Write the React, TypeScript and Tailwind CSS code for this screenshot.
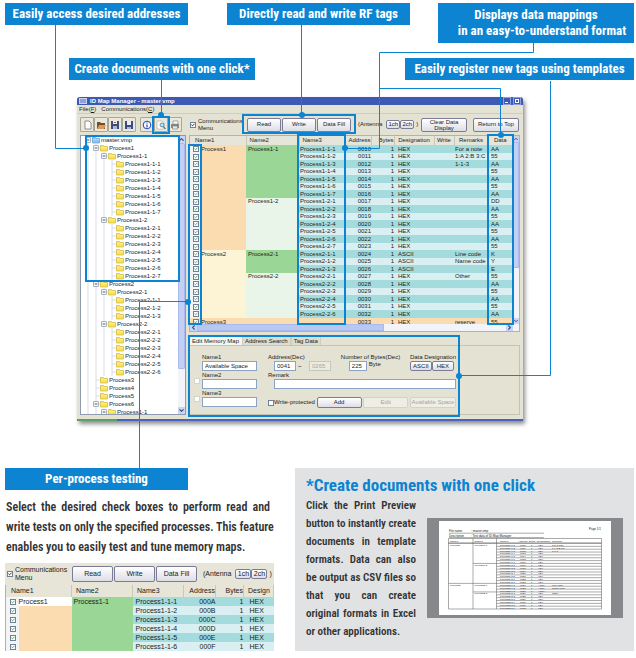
import { ReactNode } from "react";
import clsx from "clsx";
import {
  Check,
  ChevronDown,
  ChevronLeft,
  ChevronRight,
  ChevronUp,
} from "lucide-react";

type Row = {
  name1?: string;
  name2?: string;
  name3: string;
  address: string;
  designation: string;
  remarks?: string;
  data: string;
};

const groups = [
  { name1: "Process1", name2: "Process1-1", count: 7 },
  { name1: "", name2: "Process1-2", count: 7 },
  { name1: "Process2", name2: "Process2-1", count: 3 },
  { name1: "", name2: "Process2-2", count: 6 },
];

const dataValues =
  "AA 55 AA 55 AA 55 AA DD AA 55 AA 55 AA 55 K Y E 55 AA 55 AA 55 AA".split(
    " ",
  );

const remarks: Record<number, string> = {
  0: "For a note",
  1: "1:A 2:B 3:C",
  2: "1-1-3",
  14: "Line code",
  15: "Name code",
  17: "Other",
};

const rows: Row[] = groups
  .flatMap((group) =>
    Array.from({ length: group.count }, (_, i) => ({
      name1: i === 0 ? group.name1 : "",
      name2: i === 0 ? group.name2 : "",
      name3: `${group.name2}-${i + 1}`,
    })),
  )
  .map((row, i) => ({
    ...row,
    address: `00${10 + i}`,
    designation: i > 13 && i < 17 ? "ASCII" : "HEX",
    remarks: remarks[i],
    data: dataValues[i],
  }));

type Node = { label: string; level: number; open?: boolean };

const leaves = (parent: string, count: number): Node[] =>
  Array.from({ length: count }, (_, i) => ({
    label: `${parent}-${i + 1}`,
    level: 3,
  }));

const tree: Node[] = [
  { label: "master.vmp", level: 0, open: true },
  { label: "Process1", level: 1, open: true },
  { label: "Process1-1", level: 2, open: true },
  ...leaves("Process1-1", 7),
  { label: "Process1-2", level: 2, open: true },
  ...leaves("Process1-2", 7),
  { label: "Process2", level: 1, open: true },
  { label: "Process2-1", level: 2, open: true },
  ...leaves("Process2-1", 3),
  { label: "Process2-2", level: 2, open: true },
  ...leaves("Process2-2", 6),
  { label: "Process3", level: 1 },
  { label: "Process4", level: 1 },
  { label: "Process5", level: 1 },
  { label: "Process6", level: 1, open: true },
  { label: "Process1-1", level: 2, open: true },
];

const Callout = ({
  className,
  children,
}: {
  className?: string;
  children: ReactNode;
}) => (
  <h2
    className={clsx(
      "bg-[#0c84d2] text-center text-[13px] leading-[16px] font-bold whitespace-nowrap text-white py-[3px]",
      className,
    )}
  >
    {children}
  </h2>
);

const Tick = ({
  label,
  checked,
  green,
}: {
  label: string;
  checked?: boolean;
  green?: boolean;
}) => (
  <span className="relative block size-[6px] shrink-0">
    <input
      type="checkbox"
      aria-label={label}
      defaultChecked={checked}
      className="peer block size-full appearance-none border border-[#71809a] bg-white"
    />
    <Check
      strokeWidth={5}
      className={clsx(
        "pointer-events-none absolute inset-[1px] hidden size-[4px] peer-checked:block",
        green ? "text-[#27a043]" : "text-black",
      )}
    />
  </span>
);

const Button = ({
  className,
  disabled,
  children,
}: {
  className?: string;
  disabled?: boolean;
  children: ReactNode;
}) => (
  <button
    disabled={disabled}
    className={clsx(
      "flex shrink-0 items-center justify-center rounded-[2px] border text-center",
      disabled
        ? "border-[#d3d2c8] bg-[#efeee6] text-[#a5a59c]"
        : "border-[#7a7c98] bg-linear-to-b from-white to-[#dddde6]",
      className,
    )}
  >
    {children}
  </button>
);

const Antenna = ({ className }: { className: string }) => (
  <div className="flex items-center">
    <span className="mr-[4px]">(Antenna</span>
    <Button className={clsx("to-[#b9b9c6]", className)}>1ch</Button>
    <Button className={className}>2ch</Button>
    <span className="ml-[2px]">)</span>
  </div>
);

const FolderIcon = ({ blue }: { blue?: boolean }) => (
  <svg viewBox="0 0 8 8" className="size-2 shrink-0">
    <path
      d="M0.5 1.5h2.8l0.8 1h3.4v4.5h-7z"
      fill={blue ? "#8fc4f2" : "#f6e35f"}
      stroke={blue ? "#4b8fd0" : "#c9ab2d"}
      strokeWidth="0.6"
    />
    <path d="M1 3.4h6" stroke="#fff" strokeWidth="0.6" opacity="0.7" />
  </svg>
);

const Expander = () => (
  <svg viewBox="0 0 8 8" className="size-2 shrink-0">
    <path d="M4 0v8M4 4h4" stroke="#c2c8d0" strokeWidth="0.6" />
    <rect
      x="1.7"
      y="1.7"
      width="4.6"
      height="4.6"
      fill="#fff"
      stroke="#7b8ba8"
      strokeWidth="0.7"
    />
    <path d="M2.7 4h2.6" stroke="#222" strokeWidth="0.8" />
  </svg>
);

const Guide = ({ branch }: { branch?: boolean }) => (
  <svg viewBox="0 0 8 8" className="size-2 shrink-0">
    <path
      d={branch ? "M4 0v8M4 4h4" : "M4 0v8"}
      stroke="#c2c8d0"
      strokeWidth="0.6"
    />
  </svg>
);

const ProcessTree = () => (
  <div className="flex w-[106px] shrink-0 border border-[#8f9bb0] bg-white">
    <ul className="h-[278px] flex-1 overflow-hidden pl-[3px]">
      {tree.map((node, i) => (
        <li key={i} className="flex h-2 items-center leading-[8px]">
          {Array.from({ length: node.level }, (_, level) => (
            <Guide key={level} />
          ))}
          {node.open ? <Expander /> : <Guide branch />}
          <FolderIcon blue={node.level === 0} />
          <span className="ml-px whitespace-nowrap">{node.label}</span>
        </li>
      ))}
    </ul>
    <div className="flex w-[7px] flex-col bg-[#f2f4fa]">
      <ChevronUp className="size-[7px] bg-[#c9d5f5] text-[#3d5185]" strokeWidth={4} />
      <div className="h-[226px] rounded-[1px] border border-[#a8baf0] bg-[#c3d0f4]" />
      <ChevronDown
        className="mt-auto size-[7px] bg-[#c9d5f5] text-[#3d5185]"
        strokeWidth={4}
      />
    </div>
  </div>
);

const MappingTable = () => (
  <div className="border border-[#a9b2c2] bg-white">
    <div className="flex">
      <div className="h-[188px] flex-1 overflow-hidden">
        <table className="w-full table-fixed border-collapse text-left leading-[7px] whitespace-nowrap">
          <colgroup>
            <col className="w-[11px]" />
            <col className="w-[45px]" />
            <col className="w-[53px]" />
            <col className="w-[46px]" />
            <col className="w-[26px]" />
            <col className="w-[23px]" />
            <col className="w-[40px]" />
            <col className="w-[20px]" />
            <col className="w-[34px]" />
            <col />
          </colgroup>
          <thead className="bg-[#e6e5d9]">
            <tr className="h-[9px] [&>th]:border-r [&>th]:border-[#c9c7b8] [&>th]:p-0 [&>th]:font-normal">
              <th colSpan={2}>
                <span className="pl-[5px]">Name1</span>
              </th>
              <th>
                <span className="pl-[3px]">Name2</span>
              </th>
              <th>
                <span className="pl-[3px]">Name3</span>
              </th>
              <th className="text-right">Address</th>
              <th className="text-right">Bytes</th>
              <th className="text-center">Designation</th>
              <th className="text-center">Write</th>
              <th className="text-center">Remarks</th>
              <th className="text-center">Data</th>
            </tr>
          </thead>
          <tbody>
            {rows.map((row, i) => (
              <tr
                key={row.name3}
                className={clsx(
                  "[&>td]:p-0",
                  i % 2 ? "h-[7px] bg-[#d9eff2]" : "h-[8px] bg-[#a4dbdc]",
                )}
              >
                <td className="bg-[#f4f4f4]">
                  <div className="pl-[3px]">
                    <Tick label={`Select ${row.name3}`} checked green />
                  </div>
                </td>
                <td className={i < 14 ? "bg-[#fbdcb0]" : "bg-[#fdf4d6]"}>
                  {row.name1}
                </td>
                <td
                  className={
                    i < 7 || (i > 13 && i < 17)
                      ? "bg-[#9ad695]"
                      : "bg-[#eaf5e9]"
                  }
                >
                  <span className="pl-[2px]">{row.name2}</span>
                </td>
                <td>
                  <span className="pl-px">{row.name3}</span>
                </td>
                <td className="text-right">{row.address}</td>
                <td className="text-right">1</td>
                <td>
                  <span className="pl-[4px]">{row.designation}</span>
                </td>
                <td />
                <td>
                  <span className="pl-px">{row.remarks}</span>
                </td>
                <td>
                  <span className="pl-[3px]">{row.data}</span>
                </td>
              </tr>
            ))}
            <tr className="h-[8px] bg-[#fbdcb0] [&>td]:p-0">
              <td>
                <div className="pl-[3px]">
                  <Tick label="Select Process3" checked green />
                </div>
              </td>
              <td colSpan={3}>Process3</td>
              <td className="text-right">0033</td>
              <td className="text-right">1</td>
              <td>
                <span className="pl-[4px]">HEX</span>
              </td>
              <td />
              <td>
                <span className="pl-px">reserve</span>
              </td>
              <td>
                <span className="pl-[3px]">55</span>
              </td>
            </tr>
          </tbody>
        </table>
      </div>
      <div className="flex w-[6px] flex-col bg-[#f2f4fa]">
        <ChevronUp className="size-[6px] bg-[#c9d5f5] text-[#3d5185]" strokeWidth={4} />
        <div className="h-[126px] border border-[#a8baf0] bg-[#c3d0f4]" />
        <ChevronDown
          className="mt-auto size-[6px] bg-[#c9d5f5] text-[#3d5185]"
          strokeWidth={4}
        />
      </div>
    </div>
    <div className="flex h-[7px] bg-[#f2f4fa] pr-[6px]">
      <ChevronLeft className="size-[7px] bg-[#c9d5f5] text-[#3d5185]" strokeWidth={4} />
      <div className="w-[58%] border border-[#a8baf0] bg-[#b9c8f1]" />
      <ChevronRight
        className="ml-auto size-[7px] bg-[#c9d5f5] text-[#3d5185]"
        strokeWidth={4}
      />
    </div>
  </div>
);

const inputClass =
  "block h-[10px] border border-[#8ba3c4] bg-white px-[2px] leading-[8px] disabled:border-[#c4c6c0] disabled:bg-[#ecebe0] disabled:text-[#a5a59c]";

const EditPanel = () => (
  <div className="mt-[4px]">
    <div className="flex" role="tablist">
      {["Edit Memory Map", "Address Search", "Tag Data"].map((tab, i) => (
        <button
          key={tab}
          role="tab"
          aria-selected={i === 0}
          className={clsx(
            "h-[9px] border border-b-0 px-[2px] leading-[8px]",
            i === 0
              ? "border-[#f6f6f0] bg-[#f6f6f0]"
              : "border-[#cfcdbf] bg-[#dddccf]",
          )}
        >
          {tab}
        </button>
      ))}
    </div>
    <form
      className="flex h-[70px] gap-[11px] border border-[#c5c3b4] pt-[8px] pl-[4px] leading-[7px]"
      onSubmit={(e) => e.preventDefault()}
    >
      <div className="flex w-[63px] flex-col gap-px">
        <div className="pl-[8px]">
          <label htmlFor="name1">Name1</label>
          <input
            id="name1"
            defaultValue="Available Space"
            className={clsx(inputClass, "w-full")}
          />
        </div>
        {["Name2", "Name3"].map((name) => (
          <div key={name} className="flex items-center gap-[2px]">
            <input
              type="checkbox"
              aria-label={`Use ${name}`}
              className="size-[6px] shrink-0 appearance-none border border-[#d6d5ca] bg-white"
            />
            <div className="flex-1">
              <label htmlFor={name}>{name}</label>
              <input id={name} className={clsx(inputClass, "w-full")} />
            </div>
          </div>
        ))}
      </div>
      <div className="w-[188px]">
        <div className="flex justify-between whitespace-nowrap">
          <div>
            <label htmlFor="address">Address(Dec)</label>
            <div className="flex items-center pl-[6px]">
              <input
                id="address"
                defaultValue="0041"
                className={clsx(inputClass, "w-[22px]")}
              />
              <span className="w-[13px] pl-[2px]">~</span>
              <input
                aria-label="Last address"
                defaultValue="0265"
                disabled
                className={clsx(inputClass, "w-[22px]")}
              />
            </div>
          </div>
          <div>
            <label htmlFor="bytes">Number of Bytes(Dec)</label>
            <div className="flex gap-[2px] pl-[8px]">
              <input
                id="bytes"
                defaultValue="225"
                className={clsx(inputClass, "w-[18px]")}
              />
              <span>Byte</span>
            </div>
          </div>
          <div className="text-center">
            <p>Data Designation</p>
            <div className="flex">
              <Button className="h-[10px] w-[22px] to-[#b9b9c6]">ASCII</Button>
              <Button className="h-[10px] w-[22px]">HEX</Button>
            </div>
          </div>
        </div>
        <div className="mt-px">
          <label htmlFor="remark">Remark</label>
          <div className="pl-[6px]">
            <input id="remark" className={clsx(inputClass, "w-full")} />
          </div>
        </div>
        <div className="mt-[8px] flex items-center justify-between whitespace-nowrap">
          <label className="flex items-center">
            <Tick label="Write-protected" />
            Write-protected
          </label>
          <Button className="h-[11px] w-[45px]">Add</Button>
          <Button className="h-[11px] w-[45px]" disabled>
            Edit
          </Button>
          <Button className="h-[11px] w-[46px]" disabled>
            Available Space
          </Button>
        </div>
      </div>
    </form>
  </div>
);

// Icons of the program's own tool bar
const toolIcons = [
  {
    name: "New",
    art: <path d="M3 1h4l2 2v6H3z" fill="#fff" stroke="#777" strokeWidth="0.8" />,
  },
  {
    name: "Open",
    art: (
      <>
        <path d="M1 2h3l1 1h4v6H1z" fill="#7a4a2a" />
        <path d="M1 9l2-4h7L8 9z" fill="#d99a5c" />
      </>
    ),
  },
  {
    name: "Save",
    art: (
      <>
        <path d="M1 1h8v8H1z" fill="#3b4d7d" />
        <path d="M3 1h4v3H3z" fill="#e8edf8" />
        <path d="M4 2h2v1H4z" fill="#c04848" />
        <path d="M3 6h4v3H3z" fill="#a9b8d8" />
      </>
    ),
  },
  {
    name: "Save as",
    art: (
      <>
        <path d="M1 1h8v8H1z" fill="#3b4d7d" />
        <path d="M3 1h4v4H3z" fill="#e8edf8" />
        <path d="M3 7h4v2H3z" fill="#a9b8d8" />
      </>
    ),
  },
  {
    name: "Information",
    art: (
      <>
        <circle cx="5" cy="5" r="3.8" fill="#fff" stroke="#2440b8" />
        <path d="M5 4.4v3M5 2.4v1" stroke="#2440b8" strokeWidth="1.2" />
      </>
    ),
  },
  {
    name: "Print preview",
    art: (
      <>
        <path d="M1 1h5l2 2v6H1z" fill="#fff" stroke="#aaa" strokeWidth="0.6" />
        <circle cx="6" cy="5" r="2" fill="#bfe3f0" stroke="#3f7ca0" strokeWidth="0.8" />
        <path d="M7.4 6.6l2 2.4" stroke="#333" />
      </>
    ),
  },
  {
    name: "Print",
    art: (
      <>
        <path d="M3 1h5v3H3z" fill="#fff" stroke="#777" strokeWidth="0.6" />
        <path d="M1 4h8v4H1z" fill="#8b8b86" />
        <path d="M2.5 6h5v3h-5z" fill="#e8e8e4" stroke="#666" strokeWidth="0.5" />
      </>
    ),
  },
];

const ManagerWindow = () => (
  <section className="mr-[113px] ml-[77px] rounded-t-[3px] bg-[#e4e3d3] font-['Liberation_Sans',Arial,sans-serif] text-[6px] text-[#1c1c1c] shadow-[2px_3px_4px_rgba(0,0,0,0.45)]">
    <header className="flex h-2 items-center rounded-t-[3px] bg-[#3d59b5] px-[2px] text-[6px] leading-[8px] font-bold text-white">
      <svg viewBox="0 0 8 6" className="mr-[3px] h-[6px] w-2">
        <path d="M0 0h8v6H0z" fill="#c8d2f0" />
        <path d="M1 2h6M1 4h6" stroke="#3d59b5" strokeWidth="0.8" />
      </svg>
      <h1>ID Map Manager - master.vmp</h1>
      <button
        aria-label="Minimize"
        className="ml-auto flex size-2 items-end border border-[#8ea0dd] p-px"
      >
        <span className="h-px w-[3px] bg-white" />
      </button>
      <button
        aria-label="Restore"
        className="ml-[2px] size-2 border border-[#8ea0dd] p-px"
      >
        <span className="block size-[4px] border border-white" />
      </button>
    </header>
    <nav className="flex h-[9px] items-center gap-[5px] border-b border-[#cfcdbe] pl-[2px] leading-[8px]">
      <button>
        File(<u>F</u>)
      </button>
      <button>
        Communications(<u>C</u>)
      </button>
    </nav>
    <div className="flex h-[21px] items-center pr-[4px] pl-[3px] leading-[7px] whitespace-nowrap">
      {toolIcons.map((tool) => (
        <button
          key={tool.name}
          aria-label={tool.name}
          className={clsx(
            "flex h-[15px] w-[14px] items-center justify-center rounded-[1px] border border-[#a9a898] bg-[#e9e8db]",
            tool.name === "Information" && "ml-[4px]",
          )}
        >
          <svg viewBox="0 0 10 10" className="size-[10px]">
            {tool.art}
          </svg>
        </button>
      ))}
      <label className="ml-[8px] flex w-[56px] items-center gap-[2px]">
        <Tick label="Communications Menu" checked />
        <span>
          Communications
          <br />
          Menu
        </span>
      </label>
      <div className="mr-[7px] ml-px flex gap-px">
        <Button className="h-[14px] w-[34px]">Read</Button>
        <Button className="h-[14px] w-[34px]">Write</Button>
        <Button className="h-[14px] w-[34px]">Data Fill</Button>
      </div>
      <Antenna className="h-[9px] w-[14px]" />
      <Button className="ml-auto h-[14px] w-[46px] leading-[6px]">
        Clear Data
        <br />
        Display
      </Button>
      <Button className="ml-[6px] h-[14px] w-[46px]">Return to Top</Button>
    </div>
    <div className="flex gap-[3px] px-[3px] pb-[4px]">
      <ProcessTree />
      <div className="min-w-0 flex-1">
        <MappingTable />
        <EditPanel />
      </div>
    </div>
    <div className="flex h-[2px]">
      <div className="w-10 bg-[#58a063]" />
      <div className="flex-1 bg-[#4a63c0]" />
    </div>
  </section>
);

const highlights = [
  [86, 136, 93, 145],
  [153, 117, 16, 16],
  [243, 115, 112, 18],
  [189, 145, 12, 179],
  [298, 135, 47, 189],
  [488, 135, 25, 189],
  [189, 336, 270, 80],
];

const dots = [
  [86, 148],
  [161, 115],
  [302, 115],
  [345, 148],
  [501, 135],
  [459, 376],
  [188, 302],
];

const leaders = [
  "M55.5 25V148.5H86",
  "M161.5 80V115",
  "M301.5 25V115",
  "M533.5 43V52.5H379.5V148.5H345",
  "M379.5 88.5H500.5V135",
  "M550.5 81V375.5H459",
  "M188 301.5H139.5V468",
];

const Leaders = () => (
  <svg
    viewBox="0 0 636 468"
    preserveAspectRatio="none"
    className="pointer-events-none absolute top-0 left-0 h-[468px] w-full"
    fill="none"
    stroke="#0c84d2"
    aria-hidden="true"
  >
    {leaders.map((d) => (
      <path key={d} d={d} />
    ))}
    {highlights.map(([x, y, width, height]) => (
      <rect
        key={`${x}-${y}`}
        x={x}
        y={y}
        width={width}
        height={height}
        strokeWidth="2"
      />
    ))}
    {dots.map(([cx, cy]) => (
      <circle key={`${cx}-${cy}`} cx={cx} cy={cy} r="3" fill="#0c84d2" stroke="none" />
    ))}
  </svg>
);

const testRows = ["000A", "000B", "000C", "000D", "000E", "000F"];

const TestingSample = () => (
  <div className="mt-[6px] overflow-hidden bg-[#e6e5d7] font-['Liberation_Sans',Arial,sans-serif] text-[7px] text-[#1c1c1c]">
    <div className="flex h-[22px] items-center pl-[2px] leading-[8px] whitespace-nowrap">
      <label className="flex w-[65px] items-center gap-[2px]">
        <Tick label="Communications Menu in sample" checked />
        <span>
          Communications
          <br />
          Menu
        </span>
      </label>
      <div className="mr-[6px] flex gap-px">
        <Button className="h-[16px] w-[41px]">Read</Button>
        <Button className="h-[16px] w-[41px]">Write</Button>
        <Button className="h-[16px] w-[41px]">Data Fill</Button>
      </div>
      <Antenna className="h-[10px] w-[16px]" />
    </div>
    <table className="w-full table-fixed border-collapse border-l border-[#a9b2c2] text-left leading-[8px] whitespace-nowrap">
      <colgroup>
        <col className="w-[13px]" />
        <col className="w-[53px]" />
        <col className="w-[61px]" />
        <col className="w-[51px]" />
        <col className="w-[32px]" />
        <col className="w-[28px]" />
        <col />
      </colgroup>
      <thead>
        <tr className="h-[12px] [&>th]:border-r [&>th]:border-[#c9c7b8] [&>th]:p-0 [&>th]:font-normal">
          <th colSpan={2}>
            <span className="pl-[5px]">Name1</span>
          </th>
          <th>
            <span className="pl-[4px]">Name2</span>
          </th>
          <th>
            <span className="pl-[4px]">Name3</span>
          </th>
          <th className="text-right">Address</th>
          <th className="text-right">Bytes</th>
          <th>
            <span className="pl-[4px]">Design</span>
          </th>
        </tr>
      </thead>
      <tbody>
        {testRows.map((address, i) => (
          <tr
            key={address}
            className={clsx(
              "h-[9px] [&>td]:p-0",
              i % 2 ? "bg-[#d9eff2]" : "bg-[#a4dbdc]",
            )}
          >
            <td className="bg-[#f4f4f4]">
              <div className="pl-[4px]">
                <Tick label={`Test Process1-1-${i + 1}`} checked green />
              </div>
            </td>
            <td className={i === 0 ? "bg-white" : "bg-[#fbdcb0]"}>
              {i === 0 && "Process1"}
            </td>
            <td className="bg-[#9ad695]">
              {i === 0 && <span className="pl-[2px]">Process1-1</span>}
            </td>
            <td>
              <span className="pl-[3px]">Process1-1-{i + 1}</span>
            </td>
            <td className="text-right">{address}</td>
            <td className="text-right">1</td>
            <td>
              <span className="pl-[6px]">HEX</span>
            </td>
          </tr>
        ))}
      </tbody>
    </table>
  </div>
);

// Printed page of the memory map, 23 ruled lines under a two line heading
const PrintedPage = () => {
  const lineY = (i: number) => 22.5 + i * 2.85;
  return (
    <div className="bg-[#87888b] px-3 py-[3px]">
      <svg
        viewBox="0 0 172 94"
        className="block w-full bg-white font-['Liberation_Sans',Arial,sans-serif]"
        fontSize="3"
        fill="#222"
      >
        <text x="10" y="11">File name</text>
        <text x="32" y="11">: master.vmp</text>
        <text x="10" y="15.7">Description</text>
        <text x="32" y="15.7">: Test data of ID Map Manager</text>
        <text x="150" y="9">Page 1/1</text>
        <g stroke="#555" strokeWidth="0.5" fill="none">
          <path d="M10 12.2H105M10 16.6H105M9.5 17.5H162.5V88H9.5zM9.5 21.8H162.5" />
          <path d="M34 17.5V88M57.5 17.5V88" />
          {rows.map((row, i) => (
            <path
              key={row.name3}
              d={`M${row.name1 ? 9.5 : row.name2 ? 34 : 57.5} ${lineY(i)}H162.5`}
            />
          ))}
        </g>
        <g fontSize="2.5">
          <text x="11" y="20.6">Name1</text>
          <text x="35.5" y="20.6">Name2</text>
          <text x="61" y="20.6">Name3</text>
          <text x="79" y="20.6">Address</text>
          <text x="90" y="20.6">Bytes</text>
          <text x="98" y="20.6">Designation</text>
          <text x="113" y="20.6">Remarks</text>
          {rows.map((row, i) => (
            <g key={row.name3}>
              <text x="11" y={lineY(i) + 2.4}>{row.name1}</text>
              <text x="35.5" y={lineY(i) + 2.4}>{row.name2}</text>
              <text x="61" y={lineY(i) + 2.4}>{row.name3}</text>
              <text x="81" y={lineY(i) + 2.4}>{row.address}</text>
              <text x="92" y={lineY(i) + 2.4}>1</text>
              <text x="99" y={lineY(i) + 2.4}>{row.designation}</text>
              <text x="113" y={lineY(i) + 2.4}>{row.remarks}</text>
            </g>
          ))}
        </g>
      </svg>
    </div>
  );
};

const Justified = ({ lines }: { lines: string[] }) => (
  <>
    {lines.map((line, i) => (
      <span
        key={line}
        className={clsx(
          "block whitespace-nowrap",
          i < lines.length - 1 && "text-justify [text-align-last:justify]",
        )}
      >
        {line}{" "}
      </span>
    ))}
  </>
);

const App = () => {
  return (
    <main className="relative w-full bg-white pb-[7px] font-['Roboto_Condensed','Liberation_Sans_Narrow','Arial_Narrow',sans-serif] text-[#333]">
      <div className="flex items-start justify-between pt-[3px] pr-[2px] pl-[5px]">
        <Callout className="w-[183px]">Easily access desired addresses</Callout>
        <Callout className="-mr-[11px] w-[183px]">
          Directly read and write RF tags
        </Callout>
        <Callout className="w-[196px] py-[4px]">
          Displays data mappings
          <br />
          <span className="pl-3">in an easy-to-understand format</span>
        </Callout>
      </div>
      <div className="flex justify-between pt-[15px] pr-[2px] pb-[17px] pl-[69px]">
        <Callout className="w-[186px]">Create documents with one click*</Callout>
        <Callout className="w-[229px]">
          Easily register new tags using templates
        </Callout>
      </div>
      <ManagerWindow />
      <Leaders />
      <div className="mt-[47px] flex items-start justify-between pr-[2px] pl-[5px]">
        <section className="w-[269px]">
          <Callout className="w-[183px]">Per-process testing</Callout>
          <p className="mt-[7px] w-[265px] pl-px text-[12px] leading-[20px] font-semibold">
            <Justified
              lines={[
                "Select the desired check boxes to perform read and",
                "write tests on only the specified processes. This feature",
                "enables you to easily test and tune memory maps.",
              ]}
            />
          </p>
          <TestingSample />
        </section>
        <section className="h-[183px] w-[339px] bg-[#e1e2e3] pt-[6px] pr-[11px] pl-[11px]">
          <h2 className="text-[17px] leading-[23px] font-bold text-[#0c84d2]">
            *Create documents with one click
          </h2>
          <div className="flex justify-between">
            <p className="w-[110px] text-[11px] leading-[18px] font-semibold">
              <Justified
                lines={[
                  "Click the Print Preview",
                  "button to instantly create",
                  "documents in template",
                  "formats. Data can also",
                  "be output as CSV files so",
                  "that you can create",
                  "original formats in Excel",
                  "or other applications.",
                ]}
              />
            </p>
            <div className="mt-[21px] w-[196px]">
              <PrintedPage />
            </div>
          </div>
        </section>
      </div>
    </main>
  );
};

export default App;
